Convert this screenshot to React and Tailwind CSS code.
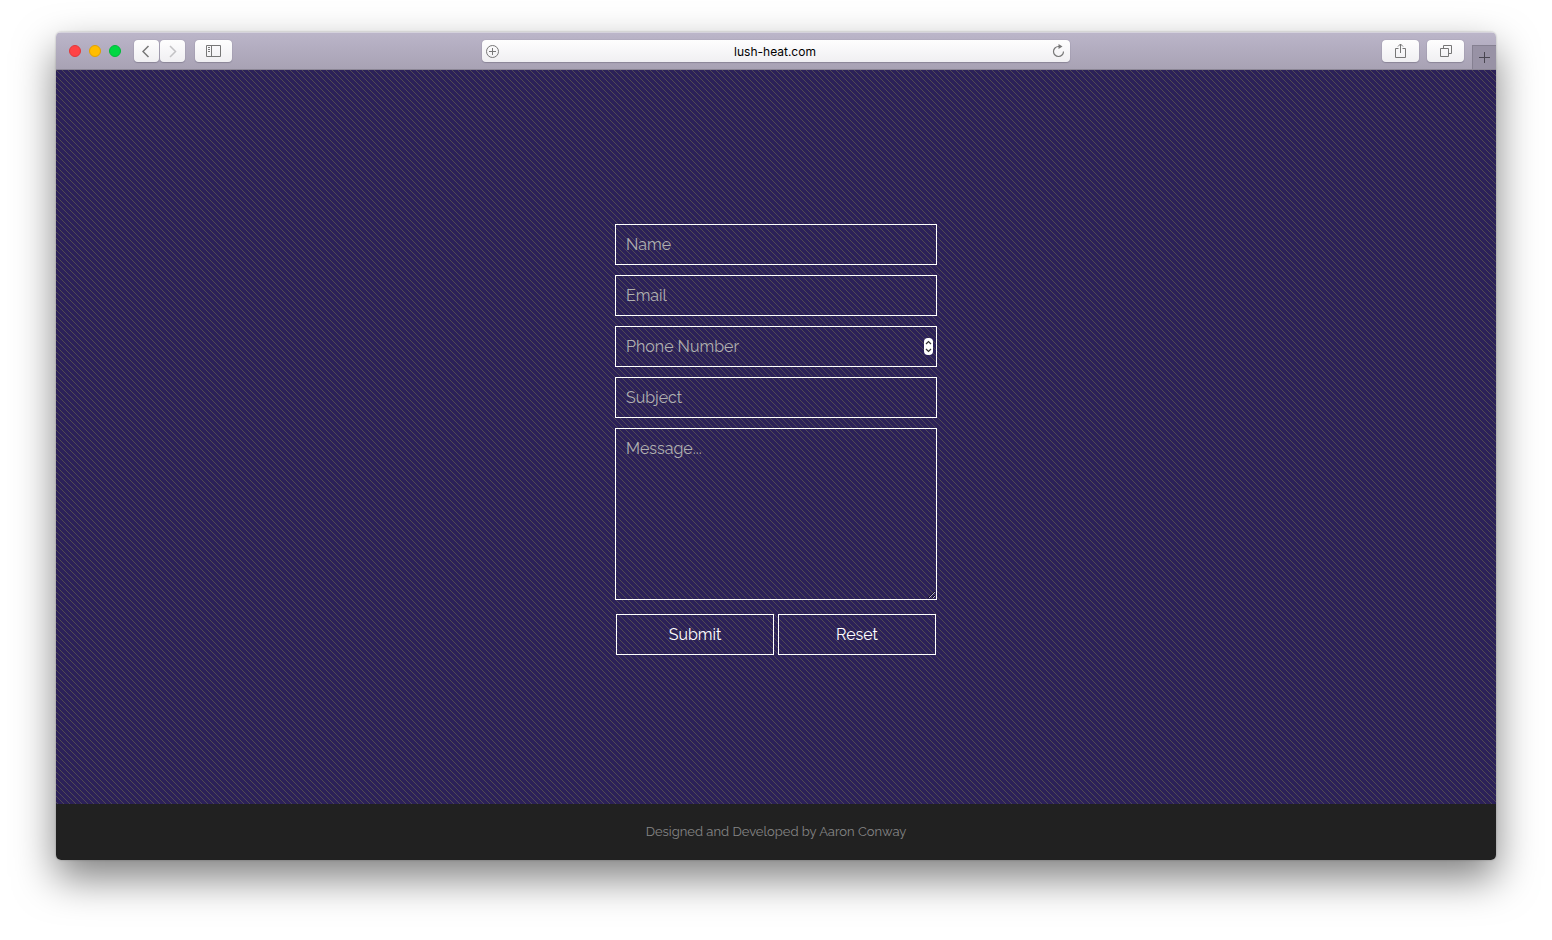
import React from "react";

const chromeButton =
  "flex h-[22px] items-center justify-center rounded-[4px] bg-linear-to-b from-[#fefefe] to-[#f0eff2] text-[#777777] shadow-[0_0_1px_#7d788c,0_1px_1px_#8d889a]";
const field =
  "block w-full border border-white bg-transparent px-2.5 font-['Raleway','Open_Sans',sans-serif] text-base leading-5 text-white outline-none placeholder:text-[#b0b0b0]";
const action =
  "h-[41px] flex-1 cursor-pointer border border-white text-base leading-5 text-white";

function Icon({ w, h, children, className = "" }) {
  return (
    <svg
      width={w}
      height={h}
      viewBox={`0 0 ${w} ${h}`}
      fill="none"
      stroke="currentColor"
      className={className}
      aria-hidden="true"
    >
      {children}
    </svg>
  );
}

function Toolbar() {
  return (
    <header className="grid h-[38px] grid-cols-[1fr_minmax(0,588px)_1fr] border-t border-b border-t-[#d5d2dc] border-b-[#8b8695] bg-linear-to-b from-[#bbb5c9] to-[#a8a2b4]">
      <div className="flex items-center pl-[13px]">
        <div className="flex gap-2">
          <button type="button" aria-label="Close" className="size-3 rounded-full border border-[#e2383b] bg-[#ff4346]" />
          <button type="button" aria-label="Minimize" className="size-3 rounded-full border border-[#e2a100] bg-[#ffbd00]" />
          <button type="button" aria-label="Zoom" className="size-3 rounded-full border border-[#00b93a] bg-[#00d742]" />
        </div>
        <div className="ml-[13px] flex gap-px">
          <button type="button" aria-label="Back" className={`${chromeButton} w-[25px]`}>
            <Icon w={9} h={13}><path d="M6.5 1 1 6.5 6.5 12" strokeWidth="1.5" /></Icon>
          </button>
          <button type="button" aria-label="Forward" className={`${chromeButton} w-[25px]`}>
            <Icon w={9} h={13} className="text-[#c3c2c5]"><path d="m2 1 5.5 5.5L2 12" strokeWidth="1.5" /></Icon>
          </button>
        </div>
        <button type="button" aria-label="Show sidebar" className={`${chromeButton} ml-2.5 w-[37px]`}>
          <Icon w={15} h={12}><path d="M.5.5h14v11H.5zM5.5.5v11M2 2.5h2M2 4.5h2M2 6.5h2" /></Icon>
        </button>
      </div>
      <div className="flex items-center">
        <div className={`${chromeButton} w-full justify-between px-1`}>
          <button type="button" aria-label="Add bookmark">
            <Icon w={13} h={13}><circle cx="6.5" cy="6.5" r="6" /><path d="M3 6.5h7M6.5 3v7" /></Icon>
          </button>
          <input
            aria-label="Address"
            defaultValue="lush-heat.com"
            className="min-w-0 flex-1 bg-transparent pt-px text-center font-['Inter',sans-serif] text-xs leading-4 text-black outline-none"
          />
          <button type="button" aria-label="Reload">
            <Icon w={15} h={14}><path d="M12.5 7.5a5 5 0 1 1-5-5h1" strokeWidth="1.2" /><path d="M7.5 0 11.5 2.5l-4 2.5z" fill="currentColor" stroke="none" /></Icon>
          </button>
        </div>
      </div>
      <div className="flex items-center justify-end gap-2">
        <button type="button" aria-label="Share" className={`${chromeButton} w-[37px]`}>
          <Icon w={11} h={17}><path d="M3.5 5.5h-3v9h10v-9h-3M5.5 10V1M3 3.5 5.5 1 8 3.5" /></Icon>
        </button>
        <button type="button" aria-label="Show all tabs" className={`${chromeButton} w-[37px]`}>
          <Icon w={12} h={12}><path d="M.5 3.5h8v8h-8zM3.5 3.5v-3h8v8h-3" /></Icon>
        </button>
        <button type="button" aria-label="New tab" className="flex h-6 w-6 items-center justify-center self-end border-t border-l border-[#858091] bg-[#9892a5] text-[#494651]">
          <Icon w={11} h={11}><path d="M5.5 0v11M0 5.5h11" /></Icon>
        </button>
      </div>
    </header>
  );
}

function Pattern() {
  return (
    <svg className="absolute inset-0 size-full" aria-hidden="true">
      <defs>
        <pattern id="stripes" width="6" height="6" patternUnits="userSpaceOnUse" shapeRendering="crispEdges">
          <rect width="6" height="6" fill="#2c2158" />
          <path fill="#504a54" d="M0 0h1v1H0zM1 1h1v1H1zM2 2h1v1H2zM3 3h1v1H3zM4 4h1v1H4zM5 5h1v1H5z" />
        </pattern>
      </defs>
      <rect width="100%" height="100%" fill="url(#stripes)" />
    </svg>
  );
}

export default function App() {
  return (
    <div className="min-h-screen bg-white px-14 pt-8 pb-20">
      <div className="flex min-h-[828px] flex-col overflow-hidden rounded-[5px] shadow-[0_18px_40px_rgba(0,0,0,0.5),0_0_2px_rgba(0,0,0,0.3)]">
        <Toolbar />
        <main className="relative flex flex-1 justify-center pt-[154px] pb-[149px] font-['Raleway','Open_Sans',sans-serif]">
          <Pattern />
          <form className="relative flex w-[322px] flex-col gap-2.5" onSubmit={(e) => e.preventDefault()}>
            <input aria-label="Name" placeholder="Name" className={`${field} h-[41px]`} />
            <input aria-label="Email" type="email" placeholder="Email" className={`${field} h-[41px]`} />
            <div className="relative">
              <input aria-label="Phone Number" inputMode="numeric" placeholder="Phone Number" className={`${field} h-[41px]`} />
              <button type="button" aria-label="Step value" className="absolute top-3 right-1 flex h-[17px] w-[9px] items-center justify-center rounded-[4px] bg-white text-[#333]">
                <Icon w={7} h={13}><path d="M1 4 3.5 1.5 6 4M1 9l2.5 2.5L6 9" strokeWidth="1.2" /></Icon>
              </button>
            </div>
            <input aria-label="Subject" placeholder="Subject" className={`${field} h-[41px]`} />
            <textarea aria-label="Message" placeholder="Message..." className={`${field} h-[172px] resize-y py-2.5`} />
            <div className="mt-1 flex gap-1 px-px">
              <button type="submit" className={action}>Submit</button>
              <button type="reset" className={action}>Reset</button>
            </div>
          </form>
        </main>
        <footer className="flex h-14 items-center justify-center bg-[#212121] font-['Raleway','Open_Sans',sans-serif] text-[13px] leading-5 text-[#858585]">
          Designed and Developed by Aaron Conway
        </footer>
      </div>
    </div>
  );
}
